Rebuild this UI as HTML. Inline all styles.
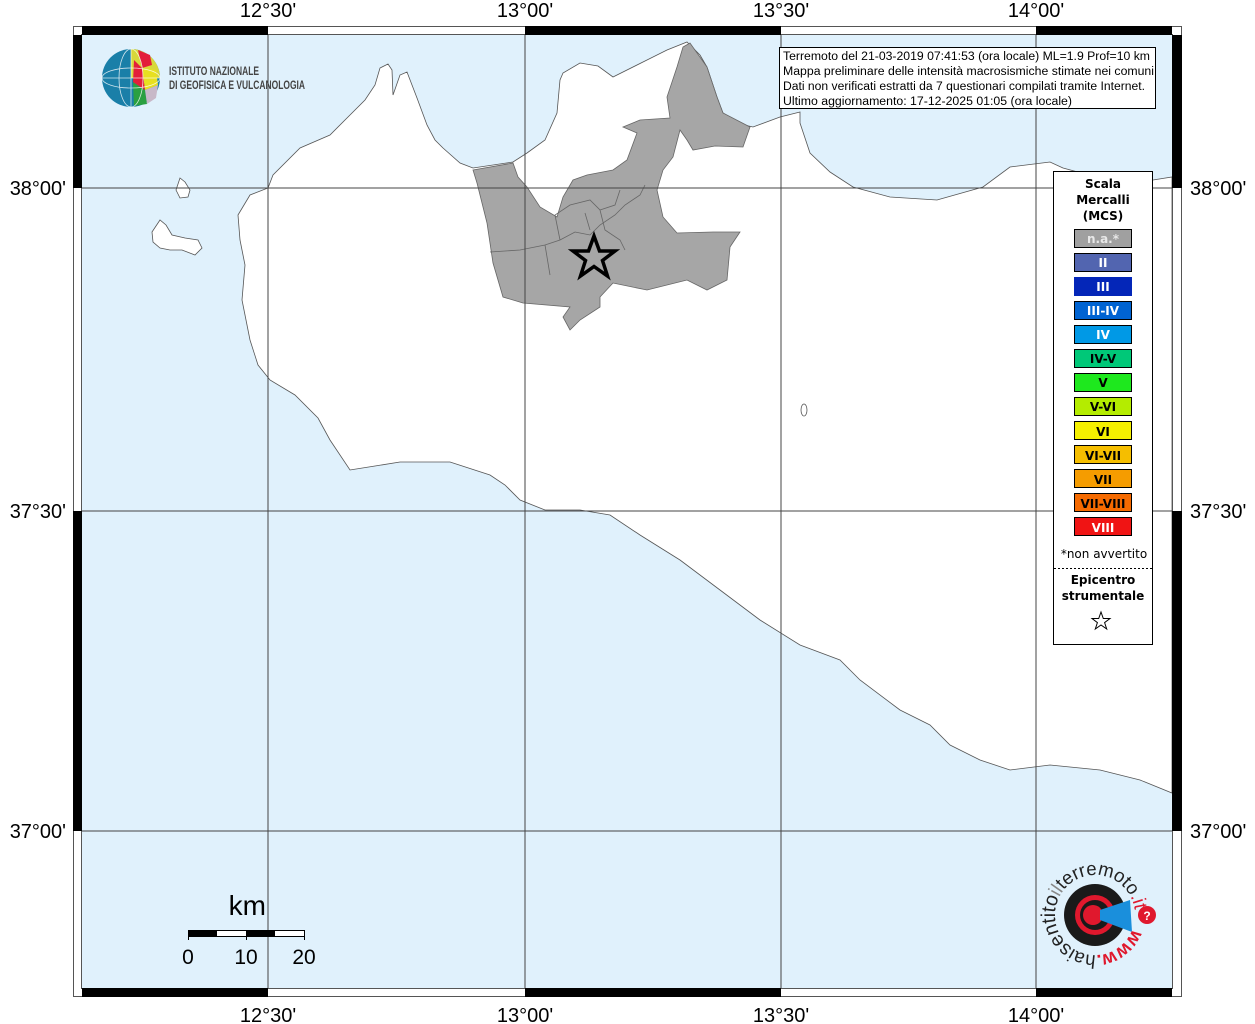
<!DOCTYPE html>
<html><head><meta charset="utf-8"><style>
html,body{margin:0;padding:0;background:#fff;}
svg{display:block;font-family:"Liberation Sans",sans-serif;}
</style></head><body>
<svg width="1255" height="1024" viewBox="0 0 1255 1024" xmlns="http://www.w3.org/2000/svg">
<rect x="0" y="0" width="1255" height="1024" fill="#fff"/>
<rect x="82" y="35" width="1090" height="953" fill="#e0f1fc"/>
<path d="M268,188 L273,175 L300,148 L330,135 L350,115 L365,100 L375,85 L380,68 L388,64 L392,70 L393,95 L400,75 L407,72 L412,85 L417,98 L427,125 L435,140 L443,148 L460,163 L473,168 L513,162 L527,153 L545,140 L557,113 L560,80 L563,73 L580,63 L598,66 L613,77 L647,60 L667,50 L687,42 L700,55 L707,67 L717,97 L723,113 L740,124 L753,127 L780,117 L800,112 L800,123 L810,153 L830,172 L853,187 L890,197 L937,200 L983,187 L1010,167 L1050,162 L1063,168 L1100,178 L1153,180 L1172,177 L1172,793 L1140,780 L1100,770 L1050,765 L1010,770 L980,760 L950,745 L930,725 L900,710 L860,680 L840,660 L800,645 L760,620 L720,590 L680,560 L640,535 L610,515 L580,510 L545,510 L520,500 L505,485 L490,475 L450,462 L420,462 L400,462 L375,466 L350,470 L330,440 L318,418 L295,395 L270,380 L258,365 L250,340 L242,300 L245,265 L240,240 L238,215 L250,195 Z" fill="#fff" stroke="#555" stroke-width="0.8"/>
<path d="M152,232 L160,220 L166,225 L172,235 L185,238 L198,240 L202,248 L195,255 L182,250 L170,250 L160,248 L153,242 Z" fill="#fff" stroke="#555" stroke-width="0.8"/>
<path d="M176,190 L180,178 L185,182 L190,190 L188,197 L180,198 Z" fill="#fff" stroke="#555" stroke-width="0.8"/>
<ellipse cx="804" cy="410" rx="3" ry="6" fill="#fff" stroke="#555" stroke-width="0.8"/>
<path d="M473,170 L513,163 L518,177 L527,187 L540,207 L557,217 L563,197 L573,180 L587,175 L613,170 L627,160 L637,133 L623,127 L640,120 L670,118 L667,97 L677,67 L683,47 L690,43 L707,67 L717,97 L723,113 L750,127 L743,147 L715,146 L693,150 L687,140 L680,130 L673,157 L663,170 L657,190 L663,217 L677,233 L713,232 L740,232 L730,247 L727,280 L707,290 L687,280 L647,290 L613,283 L600,297 L600,307 L580,320 L570,330 L563,317 L570,307 L523,303 L503,297 L493,263 L487,223 L477,183 Z" fill="#a6a6a6" stroke="#666" stroke-width="0.8"/>
<path d="M490,252 L520,250 L545,245 L560,240 L575,232 L590,235 L600,225 L615,215 L625,205 L640,195 L645,185 M545,245 L550,275 M560,240 L555,215 L570,205 L590,200 L600,210 L605,230 L620,240 L625,250 M600,210 L615,205 L620,190 M585,213 L590,230" fill="none" stroke="#666" stroke-width="0.8"/>
<g stroke="#444" stroke-width="1">
<line x1="268" y1="35" x2="268" y2="988"/><line x1="525" y1="35" x2="525" y2="988"/><line x1="781" y1="35" x2="781" y2="988"/><line x1="1036" y1="35" x2="1036" y2="988"/>
<line x1="82" y1="188" x2="1172" y2="188"/><line x1="82" y1="511" x2="1172" y2="511"/><line x1="82" y1="831" x2="1172" y2="831"/>
</g>
<path d="M594,236 L599.5,251 L615,251 L602.5,260.5 L607.5,276 L594,266.5 L580.5,276 L585.5,260.5 L573,251 L588.5,251 Z" fill="#a6a6a6" stroke="#000" stroke-width="3.5" stroke-linejoin="miter"/>
<rect x="73.5" y="26.5" width="1108" height="970" fill="none" stroke="#555" stroke-width="1"/>
<rect x="81.5" y="34.5" width="1091" height="954" fill="none" stroke="#555" stroke-width="1"/>
<g fill="#000">
<rect x="82" y="26" width="186" height="9"/><rect x="525" y="26" width="256" height="9"/><rect x="1036" y="26" width="136" height="9"/>
<rect x="82" y="988" width="186" height="9"/><rect x="525" y="988" width="256" height="9"/><rect x="1036" y="988" width="136" height="9"/>
<rect x="73" y="35" width="9" height="153"/><rect x="73" y="511" width="9" height="320"/>
<rect x="1172" y="35" width="10" height="153"/><rect x="1172" y="511" width="10" height="320"/>
</g>
<g font-size="20" fill="#000" text-anchor="middle">
<text x="268" y="17">12°30'</text><text x="525" y="17">13°00'</text><text x="781" y="17">13°30'</text><text x="1036" y="17">14°00'</text>
<text x="268" y="1022">12°30'</text><text x="525" y="1022">13°00'</text><text x="781" y="1022">13°30'</text><text x="1036" y="1022">14°00'</text>
</g>
<g font-size="20" fill="#000">
<text x="66" y="195" text-anchor="end">38°00'</text><text x="66" y="518" text-anchor="end">37°30'</text><text x="66" y="838" text-anchor="end">37°00'</text>
<text x="1190" y="195">38°00'</text><text x="1190" y="518">37°30'</text><text x="1190" y="838">37°00'</text>
</g>
<circle cx="131" cy="78" r="29" fill="#1a7fa8"/>
<path d="M131,49 A29,29 0 0 1 160,78 L131,78 Z" fill="#d8d83a"/>
<path d="M138,50 L150,55 L152,65 L142,68 Z" fill="#e31e3a"/>
<path d="M142,68 L156,70 L158,85 L145,90 Z" fill="#e8e020"/>
<path d="M133,82 L145,90 L147,104 L134,106 Z" fill="#2aa040"/>
<path d="M145,90 L158,85 L156,98 L147,104 Z" fill="#c8b8c8"/>
<path d="M134,60 L142,68 L145,90 L133,82 Z" fill="#e31e3a"/>
<g stroke="#fff" stroke-width="0.8" fill="none" opacity="0.8"><ellipse cx="131" cy="78" rx="12" ry="29"/><ellipse cx="131" cy="78" rx="29" ry="10"/><line x1="102" y1="78" x2="160" y2="78"/><line x1="131" y1="49" x2="131" y2="107"/></g>
<g font-size="11.5" fill="#444" font-weight="bold">
<text x="169" y="75" textLength="90" lengthAdjust="spacingAndGlyphs">ISTITUTO NAZIONALE</text>
<text x="169" y="89" textLength="136" lengthAdjust="spacingAndGlyphs">DI GEOFISICA E VULCANOLOGIA</text>
</g>
<rect x="779.5" y="47.5" width="376" height="61" fill="#fff" stroke="#000" stroke-width="1"/>
<g font-size="11.5" fill="#000" lengthAdjust="spacingAndGlyphs">
<text x="783" y="60" textLength="367" lengthAdjust="spacingAndGlyphs">Terremoto del 21-03-2019 07:41:53 (ora locale) ML=1.9 Prof=10 km</text>
<text x="783" y="75" textLength="371" lengthAdjust="spacingAndGlyphs">Mappa preliminare delle intensità macrosismiche stimate nei comuni</text>
<text x="783" y="90" textLength="362" lengthAdjust="spacingAndGlyphs">Dati non verificati estratti da 7 questionari compilati tramite Internet.</text>
<text x="783" y="105" textLength="289" lengthAdjust="spacingAndGlyphs">Ultimo aggiornamento: 17-12-2025 01:05 (ora locale)</text>
</g>
<rect x="1053.5" y="171.5" width="99" height="473" fill="#fff" stroke="#000" stroke-width="1"/>
<g font-family="DejaVu Sans,sans-serif" font-weight="bold" font-size="12" text-anchor="middle" fill="#000">
<text x="1103" y="188">Scala</text><text x="1103" y="204">Mercalli</text><text x="1103" y="220">(MCS)</text>
</g>
<g stroke="#000" stroke-width="1">
<rect x="1074.5" y="229.5" width="57" height="18" fill="#a0a0a0"/>
<rect x="1074.5" y="253.5" width="57" height="18" fill="#5265b0"/>
<rect x="1074.5" y="277.5" width="57" height="18" fill="#0426b8" stroke="#0426b8"/>
<rect x="1074.5" y="301.5" width="57" height="18" fill="#0063d2"/>
<rect x="1074.5" y="325.5" width="57" height="18" fill="#0099e6"/>
<rect x="1074.5" y="349.5" width="57" height="18" fill="#00c878"/>
<rect x="1074.5" y="373.5" width="57" height="18" fill="#1ee81e"/>
<rect x="1074.5" y="397.5" width="57" height="18" fill="#b4ec00"/>
<rect x="1074.5" y="421.5" width="57" height="18" fill="#f5f000"/>
<rect x="1074.5" y="445.5" width="57" height="18" fill="#f5be00"/>
<rect x="1074.5" y="469.5" width="57" height="18" fill="#f59c00"/>
<rect x="1074.5" y="493.5" width="57" height="18" fill="#f56a00"/>
<rect x="1074.5" y="517.5" width="57" height="18" fill="#f01414"/>
</g>
<g font-family="DejaVu Sans,sans-serif" font-weight="bold" font-size="12" text-anchor="middle">
<text x="1103" y="243" fill="#e8e8e8">n.a.*</text>
<text x="1103" y="267" fill="#fff">II</text>
<text x="1103" y="291" fill="#fff">III</text>
<text x="1103" y="315" fill="#fff">III-IV</text>
<text x="1103" y="339" fill="#fff">IV</text>
<text x="1103" y="363" fill="#000">IV-V</text>
<text x="1103" y="387" fill="#000">V</text>
<text x="1103" y="411" fill="#000">V-VI</text>
<text x="1103" y="436" fill="#000">VI</text>
<text x="1103" y="460" fill="#000">VI-VII</text>
<text x="1103" y="484" fill="#000">VII</text>
<text x="1103" y="508" fill="#000">VII-VIII</text>
<text x="1103" y="532" fill="#fff">VIII</text>
</g>
<text x="1104" y="558" font-family="DejaVu Sans,sans-serif" font-size="12" text-anchor="middle">*non avvertito</text>
<line x1="1054" y1="568.5" x2="1152" y2="568.5" stroke="#000" stroke-dasharray="2,2"/>
<g font-family="DejaVu Sans,sans-serif" font-weight="bold" font-size="12" text-anchor="middle">
<text x="1103" y="584">Epicentro</text><text x="1103" y="600">strumentale</text>
</g>
<path d="M1101,612 L1103.3,618.5 L1110,618.5 L1104.6,622.6 L1106.7,629 L1101,625 L1095.3,629 L1097.4,622.6 L1092,618.5 L1098.7,618.5 Z" fill="#fff" stroke="#000" stroke-width="1"/>
<text x="266" y="915" font-size="28" text-anchor="end">km</text>
<rect x="188.5" y="930.5" width="116" height="6" fill="#fff" stroke="#000"/>
<rect x="188" y="930" width="29" height="7" fill="#000"/><rect x="246" y="930" width="29" height="7" fill="#000"/>
<g stroke="#000"><line x1="188.5" y1="930" x2="188.5" y2="940"/><line x1="246.5" y1="930" x2="246.5" y2="940"/><line x1="304.5" y1="930" x2="304.5" y2="940"/></g>
<g font-size="21" text-anchor="middle"><text x="188" y="964">0</text><text x="246" y="964">10</text><text x="304" y="964">20</text></g>
<!-- haisentito logo -->
<defs><path id="ring" d="M1132.6,928.7 A40,40 0 1 1 1057.4,901.3 A40,40 0 1 1 1132.6,928.7"/></defs>
<circle cx="1095" cy="915" r="31" fill="#1a1a1a"/>
<circle cx="1095" cy="915" r="20" fill="#e0182d"/>
<circle cx="1095" cy="915" r="15" fill="#1a1a1a"/>
<circle cx="1093" cy="915" r="10" fill="#e0182d"/>
<path d="M1100,910 L1130,900 L1132,932 L1100,920 Z" fill="#1a8fdc"/>
<circle cx="1147" cy="915" r="9" fill="#e0182d"/>
<text x="1147" y="920" font-size="12" fill="#fff" text-anchor="middle" font-weight="bold">?</text>
<text font-size="19" fill="#222"><textPath href="#ring" textLength="232" lengthAdjust="spacingAndGlyphs"><tspan fill="#e0182d" font-weight="bold">www.</tspan>hai<tspan font-size="20">sentito</tspan><tspan fill="#888">il</tspan>terremoto<tspan fill="#e0182d">.it</tspan></textPath></text>
</svg>
</body></html>
